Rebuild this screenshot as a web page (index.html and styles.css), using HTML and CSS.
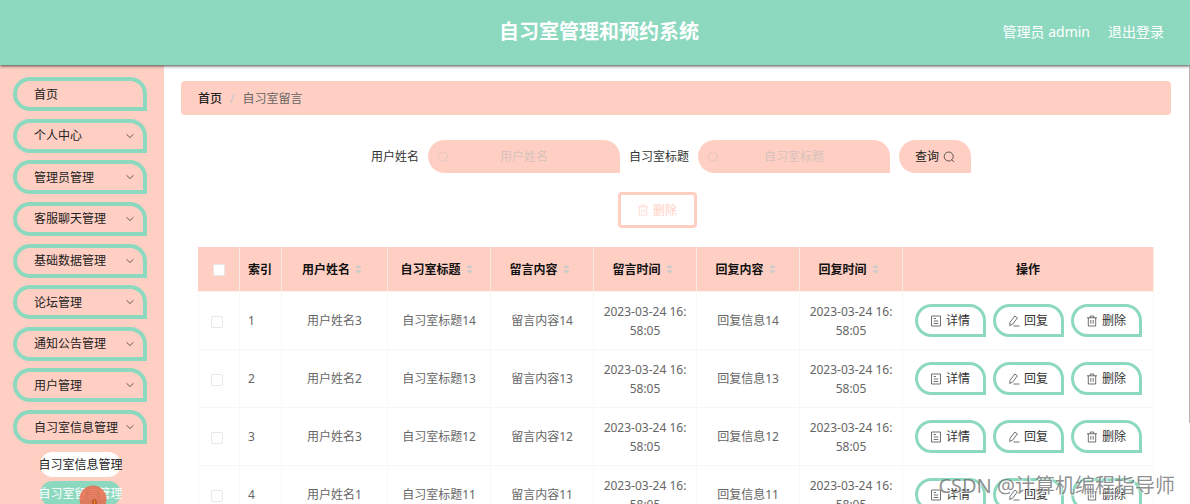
FILE: index.html
```html
<!DOCTYPE html>
<html lang="zh-CN">
<head>
<meta charset="utf-8">
<title>自习室管理和预约系统</title>
<link rel="stylesheet" href="styles.css">
</head>
<body>
<svg class="sprite" aria-hidden="true">
  <symbol id="i-down" viewBox="0 0 10 10"><path d="M1.5 3.2 5 6.6 8.5 3.2"/></symbol>
  <symbol id="i-search" viewBox="0 0 12 12"><circle cx="5.7" cy="5.5" r="4.5"/><path d="m9 8.800 2 2.200"/></symbol>
  <symbol id="i-trash" viewBox="0 0 12 12"><path d="M1 2.800h10M2.300 2.800v8.200h7.400V2.800M4.300 2.600V1h3.400v1.600M4.800 5v3.700M7.200 5v3.700"/></symbol>
  <symbol id="i-doc" viewBox="0 0 12 12"><path d="M1.500 1h9v10h-9zM3.700 3.500h2.300M3.700 6h4.600M3.700 8.500h4.600"/></symbol>
  <symbol id="i-edit" viewBox="0 0 12 12"><path d="M2 7.300 6.800 1l2.600 1.900-4.800 6.300L1.700 10.500zM5.500 11h6"/></symbol>
  <symbol id="i-sort" viewBox="0 0 8 10"><path d="M4 .5 7.500 4h-7zM4 9.500 7.500 6h-7z"/></symbol>
</svg>

<header class="topbar">
  <h1 class="title">自习室管理和预约系统</h1>
  <div class="account"><span>管理员 admin</span><a href="#">退出登录</a></div>
</header>

<div class="layout">
  <nav class="sidebar">
    <div class="menu">
      <button class="menu-item">首页</button>
      <button class="menu-item">个人中心<svg class="icon arrow"><use href="#i-down"/></svg></button>
      <button class="menu-item">管理员管理<svg class="icon arrow"><use href="#i-down"/></svg></button>
      <button class="menu-item">客服聊天管理<svg class="icon arrow"><use href="#i-down"/></svg></button>
      <button class="menu-item">基础数据管理<svg class="icon arrow"><use href="#i-down"/></svg></button>
      <button class="menu-item">论坛管理<svg class="icon arrow"><use href="#i-down"/></svg></button>
      <button class="menu-item">通知公告管理<svg class="icon arrow"><use href="#i-down"/></svg></button>
      <button class="menu-item">用户管理<svg class="icon arrow"><use href="#i-down"/></svg></button>
      <button class="menu-item">自习室信息管理<svg class="icon arrow"><use href="#i-down"/></svg></button>
    </div>
    <div class="submenu">
      <a class="sub-item" href="#">自习室信息管理</a>
      <a class="sub-item active" href="#">自习室留言管理</a>
    </div>
  </nav>

  <main class="main">
    <div class="breadcrumb"><a href="#">首页</a><span class="slash">/</span><span>自习室留言</span></div>

    <form class="search">
      <label for="q-name">用户姓名</label>
      <div class="field"><svg class="icon"><use href="#i-search"/></svg><input id="q-name" type="text" placeholder="用户姓名"></div>
      <label for="q-title">自习室标题</label>
      <div class="field"><svg class="icon"><use href="#i-search"/></svg><input id="q-title" type="text" placeholder="自习室标题"></div>
      <button class="query" type="button">查询<svg class="icon"><use href="#i-search"/></svg></button>
    </form>

    <div class="toolbar"><button class="remove" disabled><svg class="icon"><use href="#i-trash"/></svg>删除</button></div>

    <table class="grid">
      <colgroup><col class="c-small"><col class="c-small"><col class="c-name"><col><col><col><col><col><col class="c-ops"></colgroup>
      <thead>
        <tr>
          <th><input type="checkbox" class="check" aria-label="全选"></th>
          <th class="index">索引</th>
          <th><span class="sort">用户姓名<svg class="caret"><use href="#i-sort"/></svg></span></th>
          <th><span class="sort">自习室标题<svg class="caret"><use href="#i-sort"/></svg></span></th>
          <th><span class="sort">留言内容<svg class="caret"><use href="#i-sort"/></svg></span></th>
          <th><span class="sort">留言时间<svg class="caret"><use href="#i-sort"/></svg></span></th>
          <th><span class="sort">回复内容<svg class="caret"><use href="#i-sort"/></svg></span></th>
          <th><span class="sort">回复时间<svg class="caret"><use href="#i-sort"/></svg></span></th>
          <th>操作</th>
        </tr>
      </thead>
      <tbody>
        <tr>
          <td><input type="checkbox" class="check" aria-label="选择第1行"></td><td class="index">1</td><td>用户姓名3</td><td>自习室标题14</td><td>留言内容14</td><td>2023-03-24 16:58:05</td><td>回复信息14</td><td>2023-03-24 16:58:05</td>
          <td><div class="ops"><button class="op"><svg class="icon"><use href="#i-doc"/></svg>详情</button><button class="op"><svg class="icon"><use href="#i-edit"/></svg>回复</button><button class="op"><svg class="icon"><use href="#i-trash"/></svg>删除</button></div></td>
        </tr>
        <tr>
          <td><input type="checkbox" class="check" aria-label="选择第2行"></td><td class="index">2</td><td>用户姓名2</td><td>自习室标题13</td><td>留言内容13</td><td>2023-03-24 16:58:05</td><td>回复信息13</td><td>2023-03-24 16:58:05</td>
          <td><div class="ops"><button class="op"><svg class="icon"><use href="#i-doc"/></svg>详情</button><button class="op"><svg class="icon"><use href="#i-edit"/></svg>回复</button><button class="op"><svg class="icon"><use href="#i-trash"/></svg>删除</button></div></td>
        </tr>
        <tr>
          <td><input type="checkbox" class="check" aria-label="选择第3行"></td><td class="index">3</td><td>用户姓名3</td><td>自习室标题12</td><td>留言内容12</td><td>2023-03-24 16:58:05</td><td>回复信息12</td><td>2023-03-24 16:58:05</td>
          <td><div class="ops"><button class="op"><svg class="icon"><use href="#i-doc"/></svg>详情</button><button class="op"><svg class="icon"><use href="#i-edit"/></svg>回复</button><button class="op"><svg class="icon"><use href="#i-trash"/></svg>删除</button></div></td>
        </tr>
        <tr>
          <td><input type="checkbox" class="check" aria-label="选择第4行"></td><td class="index">4</td><td>用户姓名1</td><td>自习室标题11</td><td>留言内容11</td><td>2023-03-24 16:58:05</td><td>回复信息11</td><td>2023-03-24 16:58:05</td>
          <td><div class="ops"><button class="op"><svg class="icon"><use href="#i-doc"/></svg>详情</button><button class="op"><svg class="icon"><use href="#i-edit"/></svg>回复</button><button class="op"><svg class="icon"><use href="#i-trash"/></svg>删除</button></div></td>
        </tr>
      </tbody>
    </table>
  </main>
</div>

<div class="scrollbar"></div>
<svg class="pointer" viewBox="0 0 28 28" aria-hidden="true">
  <circle cx="14" cy="14" r="13.500" fill="#ee6545" fill-opacity=".82"/>
  <path d="M14 24v-8.500q1.500-2.500 3 0V20l4 1.500V28h-9l-2-5q1.500-1 4 1z" fill="#f08a24" stroke="#9c3d1c"/>
</svg>
<div class="watermark">CSDN @计算机编程指导师</div>
</body>
</html>
```
FILE: styles.css
```css
:root {
  --teal: #8dd9bf;
  --pink: #ffcfc3;
}

* { box-sizing: border-box; }

body {
  margin: 0;
  height: 100vh;
  overflow: hidden;
  position: relative;
  display: flex;
  flex-direction: column;
  background: #fff;
  color: #333;
  font: 12px/19px "Noto Sans", "Noto Sans CJK SC", sans-serif;
}

button, input { font: inherit; color: inherit; margin: 0; }
button { cursor: pointer; white-space: nowrap; }
a { color: inherit; text-decoration: none; }

.sprite { display: none; }

.icon {
  width: 12px;
  height: 12px;
  flex: none;
  fill: none;
  stroke: currentColor;
  stroke-width: 0.7;
}

.topbar {
  flex: none;
  height: 65px;
  position: relative;
  z-index: 1;
  display: grid;
  grid-template-columns: 1fr auto 1fr;
  align-items: center;
  padding: 0 26px 2px;
  padding-left: 34px;
  background: var(--teal);
  box-shadow: 0 1px 3px #444;
  color: #fff;
}

.title {
  grid-column: 2;
  margin: 0;
  font-size: 20px;
  line-height: 30px;
  font-weight: 700;
}

.account {
  display: flex;
  justify-content: flex-end;
  gap: 18px;
  font-size: 14px;
}

.layout {
  flex: 1;
  min-height: 0;
  display: flex;
}

.sidebar {
  flex: none;
  width: 164px;
  padding: 12px 17px 0 13px;
  background: var(--pink);
  overflow: hidden;
}

.menu {
  height: 367px;
  display: flex;
  flex-direction: column;
  justify-content: space-between;
}

.menu-item {
  height: 34px;
  display: flex;
  align-items: center;
  justify-content: space-between;
  padding: 0 8px 0 17px;
  border: 4px solid var(--teal);
  border-radius: 17px 17px 0 17px;
  background: transparent;
  color: #222;
}

.arrow { width: 10px; height: 10px; }

.submenu {
  display: flex;
  flex-direction: column;
  gap: 4px;
  padding: 8px 26px 0 27px;
}

.sub-item {
  display: flex;
  justify-content: center;
  height: 25px;
  line-height: 25px;
  border-radius: 13px;
  background: #fff;
  color: #222;
  white-space: nowrap;
}

.sub-item.active { background: var(--teal); color: #fff; }

.main {
  flex: 1;
  min-width: 0;
  padding: 16px 19px 0 17px;
}

.breadcrumb {
  display: flex;
  align-items: center;
  gap: 8px;
  height: 34px;
  padding: 0 17px;
  border-radius: 4px;
  background: var(--pink);
  color: #666;
}

.breadcrumb a { color: #222; font-weight: 500; }
.slash { color: #c0c4cc; }

.search {
  display: flex;
  align-items: center;
  justify-content: center;
  gap: 9px;
  padding: 25px 10px 0 0;
}

.field {
  width: 192px;
  height: 33px;
  display: flex;
  align-items: center;
  padding: 0 21px 0 9px;
  border-radius: 17px 17px 0 17px;
  background: var(--pink);
  color: #d6c3bd;
}

.field input {
  flex: 1;
  min-width: 0;
  padding: 0;
  border: 0;
  outline: 0;
  background: transparent;
  text-align: center;
}

.field input::placeholder { color: #d6c3bd; }

.query {
  width: 72px;
  height: 33px;
  display: flex;
  align-items: center;
  justify-content: center;
  gap: 4px;
  padding: 0;
  border: 0;
  border-radius: 17px 17px 0 17px;
  background: var(--pink);
  color: #222;
}

.toolbar {
  display: flex;
  justify-content: center;
  padding: 19px 38px 19px 0;
}

.remove {
  width: 79px;
  height: 36px;
  display: flex;
  align-items: center;
  justify-content: center;
  gap: 4px;
  padding: 0;
  border: 3px solid var(--pink);
  border-radius: 4px;
  background: #fff;
  color: var(--pink);
}

.grid {
  width: calc(100% - 34px);
  margin: 0 17px;
  table-layout: fixed;
  border-collapse: separate;
  border-spacing: 0;
  text-align: center;
}

.c-small { width: 42px; }
.c-name { width: 106px; }
.c-ops { width: 251px; }

.grid th {
  height: 45px;
  padding: 0;
  background: var(--pink);
  border-right: 1px solid #fbe9e4;
  border-bottom: 1px solid #fbf1ee;
  color: #111;
  font-weight: 700;
}

.grid td {
  height: 58px;
  padding: 0 8px;
  border-right: 1px solid #f8f8f8;
  border-bottom: 1px solid #f6f6f6;
  color: #666;
  word-break: break-all;
}

.grid td:first-child {
  padding: 0 5px 0 0;
  border-left: 1px solid #f8f8f8;
}

.grid td:last-child { padding: 0; }

.grid .index {
  padding: 0 0 0 8px;
  text-align: left;
}

.sort {
  display: inline-flex;
  align-items: center;
}

.caret {
  width: 17px;
  height: 10px;
  fill: #c9cbcc;
}

.check {
  appearance: none;
  display: inline-block;
  width: 12px;
  height: 12px;
  vertical-align: middle;
  border: 1px solid #e8e8e8;
  border-radius: 2px;
  background: #fff;
}

.ops {
  display: flex;
  justify-content: center;
  gap: 7px;
}

.op {
  width: 71px;
  height: 33px;
  display: flex;
  align-items: center;
  justify-content: center;
  gap: 4px;
  padding: 0;
  border: 3px solid var(--teal);
  border-radius: 17px 17px 0 17px;
  background: #fff;
  color: #333;
}

.scrollbar {
  position: absolute;
  top: 65px;
  right: 0;
  width: 1px;
  height: 358px;
  background: #b5b5b5;
}

.pointer {
  position: absolute;
  left: 79px;
  top: 485px;
  width: 28px;
  height: 28px;
}

.watermark {
  position: absolute;
  right: 15px;
  bottom: 4px;
  font-size: 20px;
  line-height: 28px;
  color: #666666bb;
  text-shadow: 1px 1px 1px #fff;
  pointer-events: none;
}
```
